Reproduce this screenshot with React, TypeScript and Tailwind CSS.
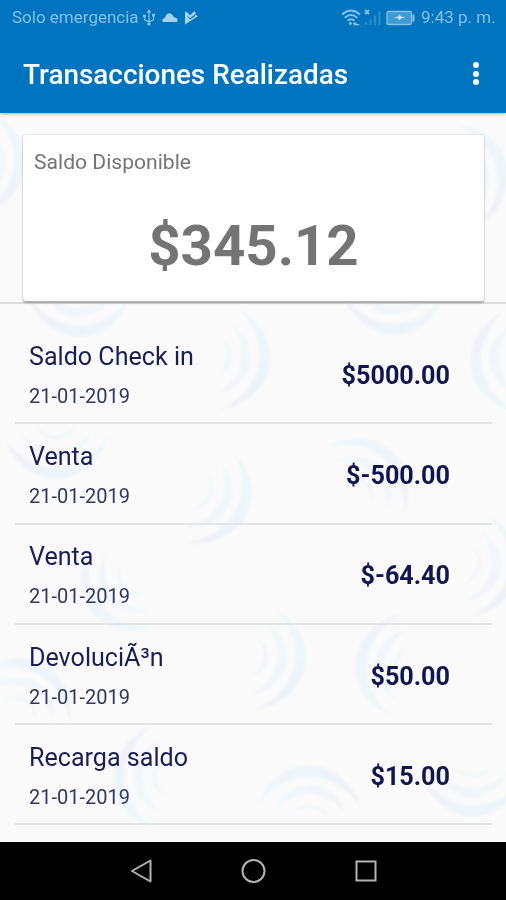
type Movement = { title: string; date: string; amount: string };

const movements: Movement[] = [
  { title: "Saldo Check in", date: "21-01-2019", amount: "$5000.00" },
  { title: "Venta", date: "21-01-2019", amount: "$-500.00" },
  { title: "Venta", date: "21-01-2019", amount: "$-64.40" },
  { title: "DevoluciÃ³n", date: "21-01-2019", amount: "$50.00" },
  { title: "Recarga saldo", date: "21-01-2019", amount: "$15.00" },
];

// Wave marks of the wallpaper: centre x, centre y, rotation in degrees.
const waves: [number, number, number][] = [
  [-33, 160, 10],
  [450, 178, -15],
  [80, 278, 92],
  [395, 276, 88],
  [212, 355, 12],
  [529, 360, 172],
  [57, 420, 88],
  [194, 488, 28],
  [352, 494, -48],
  [138, 576, 142],
  [462, 562, 12],
  [15, 715, -62],
  [248, 655, 12],
  [414, 668, 188],
  [172, 778, 178],
  [308, 824, -88],
  [474, 758, 92],
];

function Wallpaper() {
  return (
    <svg className="absolute inset-0 h-full w-full" viewBox="0 0 506 900" aria-hidden="true">
      <defs>
        <linearGradient id="tint" gradientUnits="userSpaceOnUse" x1="0" y1="-48" x2="0" y2="48">
          <stop offset="0" stopColor="#edf8f9" />
          <stop offset="0.5" stopColor="#eef5f9" />
          <stop offset="1" stopColor="#f1f1f8" />
        </linearGradient>
        <filter id="soft">
          <feGaussianBlur stdDeviation="0.9" />
        </filter>
        <g id="wave" fill="url(#tint)">
          <path d="M18 -50 C73 -32 71 32 19 52 C56 24 58 -22 18 -50Z" />
          <path d="M12 -34 C48 -21 48 24 12 37 C36 17 36 -14 12 -34Z" opacity="0.75" />
          <path d="M6 -18 C25 -12 25 14 6 21 C18 9 18 -8 6 -18Z" opacity="0.5" />
        </g>
      </defs>
      <g filter="url(#soft)">
        {waves.map(([x, y, r]) => (
          <use key={`${x}-${y}`} href="#wave" transform={`translate(${x} ${y}) rotate(${r})`} />
        ))}
      </g>
    </svg>
  );
}

function StatusBar() {
  return (
    <div className="flex h-9 items-center justify-between pr-[11px] pl-3 text-[17px] text-[#86c0e6]">
      <div className="flex items-center">
        <span className="w-[127px] whitespace-nowrap">Solo emergencia</span>
        <svg className="ml-[3px] h-[18px] w-3.5" viewBox="0 0 14 18" fill="none" stroke="currentColor" strokeWidth="1.3">
          <path d="M7 3v11M2.5 7v3.3q0 1.5 4.5 2.2 4.5-.7 4.5-2.2V6" />
          <path d="M7 0 9.2 3.7H4.8ZM1 5.7h3v2.6H1ZM10 4.8h3v2.6h-3Z" fill="currentColor" stroke="none" />
          <circle cx="7" cy="15" r="1.7" fill="currentColor" stroke="none" />
        </svg>
        <svg className="ml-1.5 h-3 w-4 text-[#a3d2ef]" viewBox="0 0 16 12" fill="currentColor">
          <path d="M2.2 10C-.2 10-.4 7.7 1.3 6.8 2.4 6.3 3 6 3.5 4.6 4.9.4 9.3.2 11 4c.5 1 .9 1.2 2 1.5 3.4.7 3.4 4.5.8 4.5Z" />
        </svg>
        <svg className="ml-1.5 h-3.5 w-3.5 text-[#a3d2ef]" viewBox="0 0 14 14" fill="currentColor">
          <path d="M1 .5 3.5 1.5 6 4.3 10.5 0 12 2.5 6.2 7.3 2.5 4.5 6 8.5 10 6 11.5 3.8 14 5.2 1 13.5Z" />
        </svg>
      </div>
      <div className="flex items-center">
        <svg className="h-[18px] w-5" viewBox="0 0 20 18" fill="none" stroke="currentColor" strokeWidth="2">
          <path d="M1 5.5Q10-2.5 19 5.5M3.7 8.7q6.3-5.5 12.6 0M6.5 11.7q3.5-3 7 0" />
          <path d="m9.5 12.5 1.8 2-1.8 2-1.8-2ZM12 13.5h3l1 1.5h3L17 16.5h-4Z" fill="currentColor" stroke="none" />
        </svg>
        <svg className="ml-0.5 h-[18px] w-[18px]" viewBox="0 0 18 18">
          <path d="m2 1 4 4M6 1 2 5" stroke="currentColor" strokeWidth="1.8" />
          <path d="M3 13v3M7.5 10.5V16M12 6.5v9.5M16.5 2.5v13.5" stroke="#2b8dcc" strokeWidth="2.2" />
        </svg>
        <svg className="ml-[5px] h-4 w-[30px]" viewBox="0 0 30 16">
          <rect x="1" y="1.5" width="24.5" height="13" rx="1.5" fill="#3f9ad4" stroke="currentColor" strokeWidth="1.3" />
          <path d="M27.5 4.5v7" stroke="currentColor" strokeWidth="2" />
          <path d="M8 7.5 12 6.5l1.6-2L15 6.5l4.5 1-4.5 1-1.4 2L12 8.5Z" fill="#b9e2f6" />
        </svg>
        <span className="ml-[5px] w-[74px] whitespace-nowrap">9:43 p. m.</span>
      </div>
    </div>
  );
}

export default function App() {
  return (
    <div className="relative flex h-[900px] w-[506px] flex-col overflow-hidden bg-[#fafafa] font-[Roboto,sans-serif]">
      <Wallpaper />
      <header className="relative h-[113px] shrink-0 bg-[#0074bf] shadow-[0_1px_3px_rgba(0,0,0,0.3)]">
        <StatusBar />
        <div className="flex h-[77px] items-center justify-between pr-[27px] pl-[23px]">
          <h1 className="text-[27.9px] font-medium whitespace-nowrap text-white">Transacciones Realizadas</h1>
          <div className="-mt-0.5 flex flex-col gap-[2.5px]">
            <i className="size-1.5 rounded-full bg-white" />
            <i className="size-1.5 rounded-full bg-white" />
            <i className="size-1.5 rounded-full bg-white" />
          </div>
        </div>
      </header>
      <section className="relative h-[191px] shrink-0 border-b-2 border-[#dcdcdc] pr-[22px] pl-[23px] pt-[22px]">
        <div className="h-[166px] rounded-[3px] bg-white px-[11px] pt-3 text-[#747474] shadow-[0_0_2px_rgba(0,0,0,0.2),0_1.5px_2px_rgba(0,0,0,0.28)]">
          <h2 className="text-[21.1px] leading-[30px]">Saldo Disponible</h2>
          <p className="mt-9 text-center text-[56.4px] leading-[66px] font-bold">$345.12</p>
        </div>
      </section>
      <ul className="relative flex h-[538px] shrink-0 flex-col pr-3.5 pl-[15px] pt-5 text-[#191f55]">
        {movements.map((m, i) => (
          <li key={i} className="flex h-[100.3px] shrink-0 items-center justify-between border-b-2 border-[#e3e4e6] pr-[42px] pl-3.5">
            <div className="pt-[5.5px]">
              <h3 className="pt-px text-[25.1px] leading-[39px]">{m.title}</h3>
              <p className="text-[20px] leading-[40px] text-[#30385f]">{m.date}</p>
            </div>
            <strong className="mt-[5px] text-[25.2px] font-bold text-[#10164f]">{m.amount}</strong>
          </li>
        ))}
      </ul>
      <nav className="relative h-[58px] shrink-0 bg-black">
        <svg className="h-full w-full" viewBox="0 0 506 58" fill="none" stroke="#b4b4b4" strokeWidth="2">
          <path d="M132 29 150.5 18.5V39.5Z" strokeLinejoin="round" />
          <circle cx="253.5" cy="29" r="11" />
          <rect x="356.5" y="19.5" width="19" height="19" />
        </svg>
      </nav>
    </div>
  );
}
